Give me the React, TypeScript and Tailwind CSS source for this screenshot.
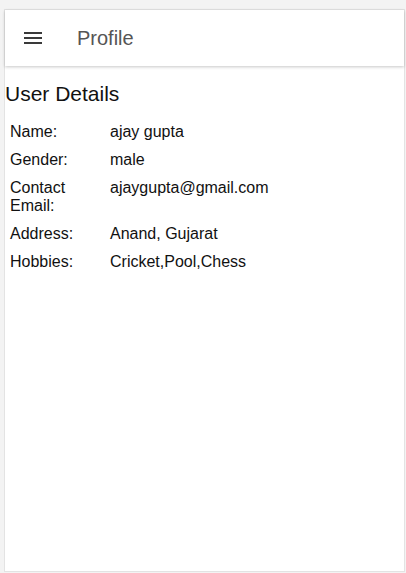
import React from "react"

const details: { label: string; value: string }[] = [
  { label: "Name:", value: "ajay gupta" },
  { label: "Gender:", value: "male" },
  { label: "Contact Email:", value: "ajaygupta@gmail.com" },
  { label: "Address:", value: "Anand, Gujarat" },
  { label: "Hobbies:", value: "Cricket,Pool,Chess" },
]

const MenuIcon = () => (
  <svg width="24" height="24" viewBox="0 0 24 24" className="text-[#3a3a3a]">
    <path fill="currentColor" d="M3 18h18v-2H3v2zm0-5h18v-2H3v2zm0-7v2h18V6H3z" />
  </svg>
)

export default function App() {
  return (
    <div
      className="h-[573px] bg-[#f3f3f3] pt-[9px] pl-[4px] overflow-hidden"
      style={{ fontFamily: '"Liberation Sans", Arial, sans-serif' }}
    >
      <div className="h-[563px] w-[401px] bg-white border border-[#e3e3e3] flex flex-col">
        <header className="h-[56px] flex items-center bg-white shadow-[0_1px_3px_rgba(0,0,0,0.22)] relative z-10">
          <div className="ml-[16px] w-[24px] h-[24px]">
            <MenuIcon />
          </div>
          <span className="ml-[32px] text-[20px] text-[#555555]">Profile</span>
        </header>
        <main className="pt-[16px]">
          <h3 className="text-[21px] leading-[24px] text-[#111111]">User Details</h3>
          <div className="mt-[12px] pl-[5px] flex flex-col text-[16px] leading-[18px] text-[#111111]">
            {details.map((d) => (
              <div key={d.label} className="flex py-[5px]">
                <div className="w-[100px] pr-[20px]">{d.label}</div>
                <div>{d.value}</div>
              </div>
            ))}
          </div>
        </main>
      </div>
    </div>
  )
}
